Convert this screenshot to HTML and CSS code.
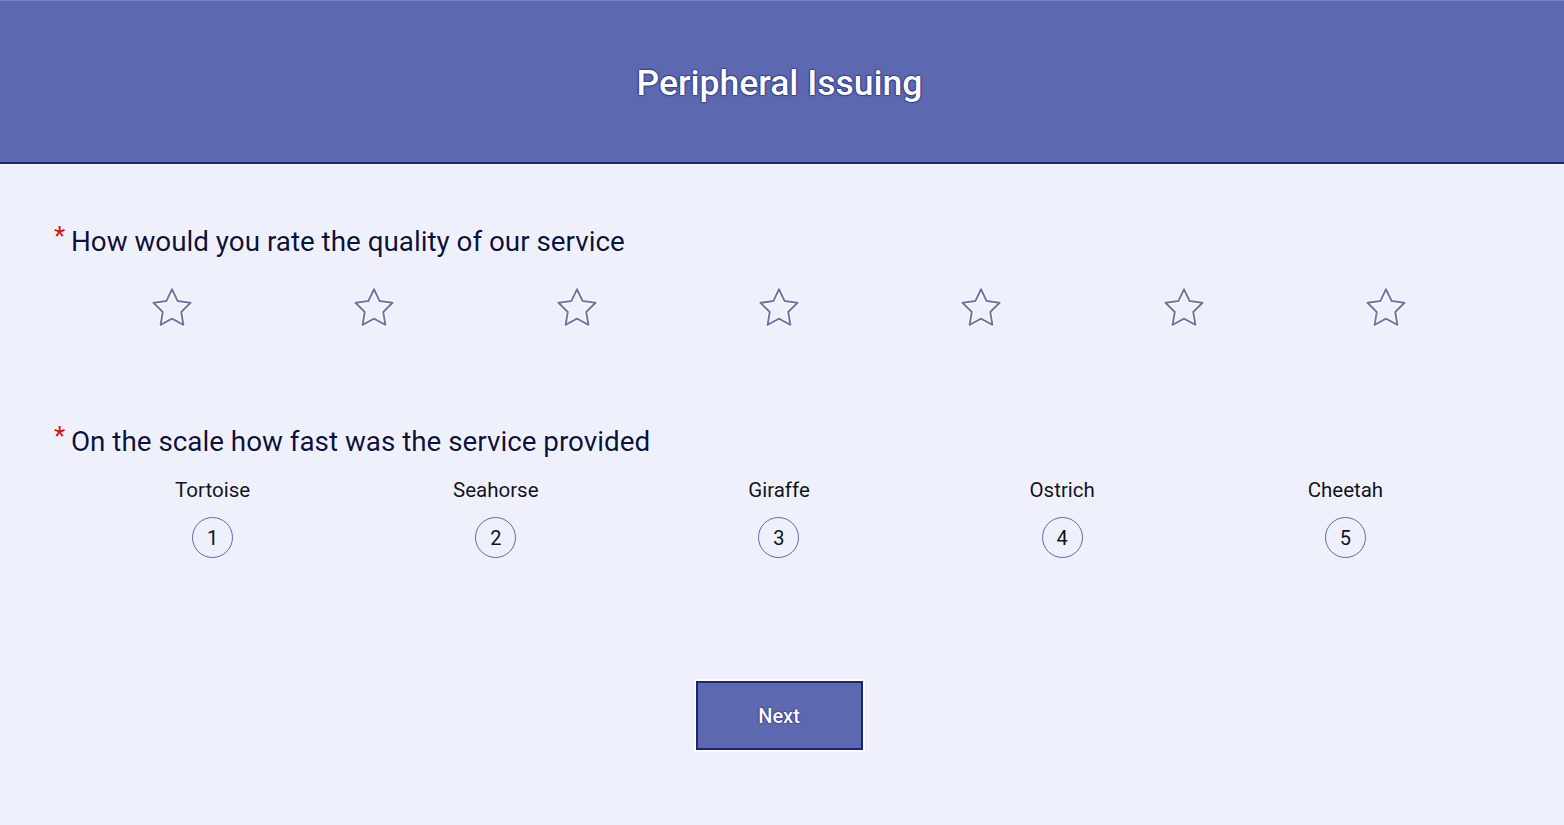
FILE: index.html
```html
<!DOCTYPE html>
<html>
<head>
<meta charset="utf-8">
<link rel="stylesheet" href="styles.css">
</head>
<body>
<header class="header">
  <h1 class="title">Peripheral Issuing</h1>
</header>
<main class="main">
  <section class="question q1">
    <div class="q-label"><span class="req">*</span><span class="q-text">How would you rate the quality of our service</span></div>
    <div class="stars">
      <div class="star-cell"><svg class="star" viewBox="0 0 24 24"><polygon class="halo" points="12,2.2 14.95,8.4 21.7,9.3 16.8,14.05 17.95,20.8 12,17.6 6.05,20.8 7.2,14.05 2.3,9.3 9.05,8.4"/><polygon class="line" points="12,2.2 14.95,8.4 21.7,9.3 16.8,14.05 17.95,20.8 12,17.6 6.05,20.8 7.2,14.05 2.3,9.3 9.05,8.4"/></svg></div>
      <div class="star-cell"><svg class="star" viewBox="0 0 24 24"><polygon class="halo" points="12,2.2 14.95,8.4 21.7,9.3 16.8,14.05 17.95,20.8 12,17.6 6.05,20.8 7.2,14.05 2.3,9.3 9.05,8.4"/><polygon class="line" points="12,2.2 14.95,8.4 21.7,9.3 16.8,14.05 17.95,20.8 12,17.6 6.05,20.8 7.2,14.05 2.3,9.3 9.05,8.4"/></svg></div>
      <div class="star-cell"><svg class="star" viewBox="0 0 24 24"><polygon class="halo" points="12,2.2 14.95,8.4 21.7,9.3 16.8,14.05 17.95,20.8 12,17.6 6.05,20.8 7.2,14.05 2.3,9.3 9.05,8.4"/><polygon class="line" points="12,2.2 14.95,8.4 21.7,9.3 16.8,14.05 17.95,20.8 12,17.6 6.05,20.8 7.2,14.05 2.3,9.3 9.05,8.4"/></svg></div>
      <div class="star-cell"><svg class="star" viewBox="0 0 24 24"><polygon class="halo" points="12,2.2 14.95,8.4 21.7,9.3 16.8,14.05 17.95,20.8 12,17.6 6.05,20.8 7.2,14.05 2.3,9.3 9.05,8.4"/><polygon class="line" points="12,2.2 14.95,8.4 21.7,9.3 16.8,14.05 17.95,20.8 12,17.6 6.05,20.8 7.2,14.05 2.3,9.3 9.05,8.4"/></svg></div>
      <div class="star-cell"><svg class="star" viewBox="0 0 24 24"><polygon class="halo" points="12,2.2 14.95,8.4 21.7,9.3 16.8,14.05 17.95,20.8 12,17.6 6.05,20.8 7.2,14.05 2.3,9.3 9.05,8.4"/><polygon class="line" points="12,2.2 14.95,8.4 21.7,9.3 16.8,14.05 17.95,20.8 12,17.6 6.05,20.8 7.2,14.05 2.3,9.3 9.05,8.4"/></svg></div>
      <div class="star-cell"><svg class="star" viewBox="0 0 24 24"><polygon class="halo" points="12,2.2 14.95,8.4 21.7,9.3 16.8,14.05 17.95,20.8 12,17.6 6.05,20.8 7.2,14.05 2.3,9.3 9.05,8.4"/><polygon class="line" points="12,2.2 14.95,8.4 21.7,9.3 16.8,14.05 17.95,20.8 12,17.6 6.05,20.8 7.2,14.05 2.3,9.3 9.05,8.4"/></svg></div>
      <div class="star-cell"><svg class="star" viewBox="0 0 24 24"><polygon class="halo" points="12,2.2 14.95,8.4 21.7,9.3 16.8,14.05 17.95,20.8 12,17.6 6.05,20.8 7.2,14.05 2.3,9.3 9.05,8.4"/><polygon class="line" points="12,2.2 14.95,8.4 21.7,9.3 16.8,14.05 17.95,20.8 12,17.6 6.05,20.8 7.2,14.05 2.3,9.3 9.05,8.4"/></svg></div>
    </div>
  </section>
  <section class="question q2">
    <div class="q-label"><span class="req">*</span><span class="q-text">On the scale how fast was the service provided</span></div>
    <div class="scale">
      <div class="scale-item"><span class="scale-name">Tortoise</span><span class="scale-num">1</span></div>
      <div class="scale-item"><span class="scale-name">Seahorse</span><span class="scale-num">2</span></div>
      <div class="scale-item"><span class="scale-name">Giraffe</span><span class="scale-num">3</span></div>
      <div class="scale-item"><span class="scale-name">Ostrich</span><span class="scale-num">4</span></div>
      <div class="scale-item"><span class="scale-name">Cheetah</span><span class="scale-num">5</span></div>
    </div>
  </section>
  <div class="actions">
    <button class="next">Next</button>
  </div>
</main>
</body>
</html>
```

FILE: styles.css
```css
html, body {
  margin: 0;
  padding: 0;
  height: 100%;
}
body {
  background: #eef0fb;
  font-family: Roboto, "Noto Sans", sans-serif;
  color: #0b1140;
}
.header {
  box-sizing: border-box;
  height: 164px;
  background: #5c69b0;
  border-top: 1px solid #7380cc;
  border-bottom: 2px solid #1a237e;
  box-shadow: 0 1px 0 #f7f8ff;
  display: flex;
  align-items: center;
  justify-content: center;
  padding-right: 5px;
}
.title {
  margin: 0;
  font-size: 35.5px;
  font-weight: 500;
  color: #ffffff;
  line-height: 40px;
  padding-top: 2px;
  text-shadow: 0 0 1px #1a237e, 0 0 2px #1a237e, 0 0 2px #1a237e;
}
.main {
  padding: 0 77px 0 54px;
}
.question {
  display: flex;
  flex-direction: column;
}
.q1 {
  padding-top: 62px;
}
.q2 {
  padding-top: 101px;
}
.q-label {
  display: flex;
  align-items: flex-start;
  height: 32px;
}
.req {
  width: 17px;
  color: #e01010;
  font-size: 26px;
  line-height: 26px;
  margin-top: -3px;
}
.q-text {
  font-size: 27.8px;
  line-height: 32px;
  color: #0b1140;
  text-shadow: 0 0 2px #ffffff, 0 0 2px #ffffff;
}
.stars {
  margin-left: 17px;
  margin-top: 27px;
  display: grid;
  grid-template-columns: repeat(7, 1fr);
  height: 40px;
}
.star-cell {
  display: flex;
  justify-content: center;
  align-items: center;
}
.star {
  width: 46px;
  height: 46px;
  overflow: visible;
}
.star .halo {
  fill: none;
  stroke: #ffffff;
  stroke-width: 2.2;
  stroke-linejoin: round;
}
.star .line {
  fill: none;
  stroke: #6c77b0;
  stroke-width: 1.05;
  stroke-linejoin: round;
}
.scale {
  margin-left: 17px;
  margin-top: 20px;
  display: grid;
  grid-template-columns: repeat(5, 1fr);
}
.scale-item {
  display: flex;
  flex-direction: column;
  align-items: center;
}
.scale-name {
  font-size: 20.5px;
  line-height: 24px;
  color: #101320;
  text-shadow: 0 0 2px #ffffff;
}
.scale-num {
  margin-top: 15px;
  box-sizing: border-box;
  width: 41px;
  height: 41px;
  border: 1px solid #5c69b0;
  border-radius: 50%;
  display: flex;
  align-items: center;
  justify-content: center;
  font-size: 20px;
  color: #101320;
}
.actions {
  display: flex;
  justify-content: center;
  padding-top: 123px;
  padding-left: 17px;
}
.next {
  box-sizing: border-box;
  width: 167px;
  height: 69px;
  background: #5c69b0;
  border: 2px solid #1a237e;
  box-shadow: 0 0 0 2px #ffffff;
  color: #ffffff;
  font-family: Roboto, "Noto Sans", sans-serif;
  font-size: 20px;
  font-weight: 500;
  text-shadow: 0 0 1px #1a237e, 0 0 2px #1a237e;
  cursor: pointer;
}
```
